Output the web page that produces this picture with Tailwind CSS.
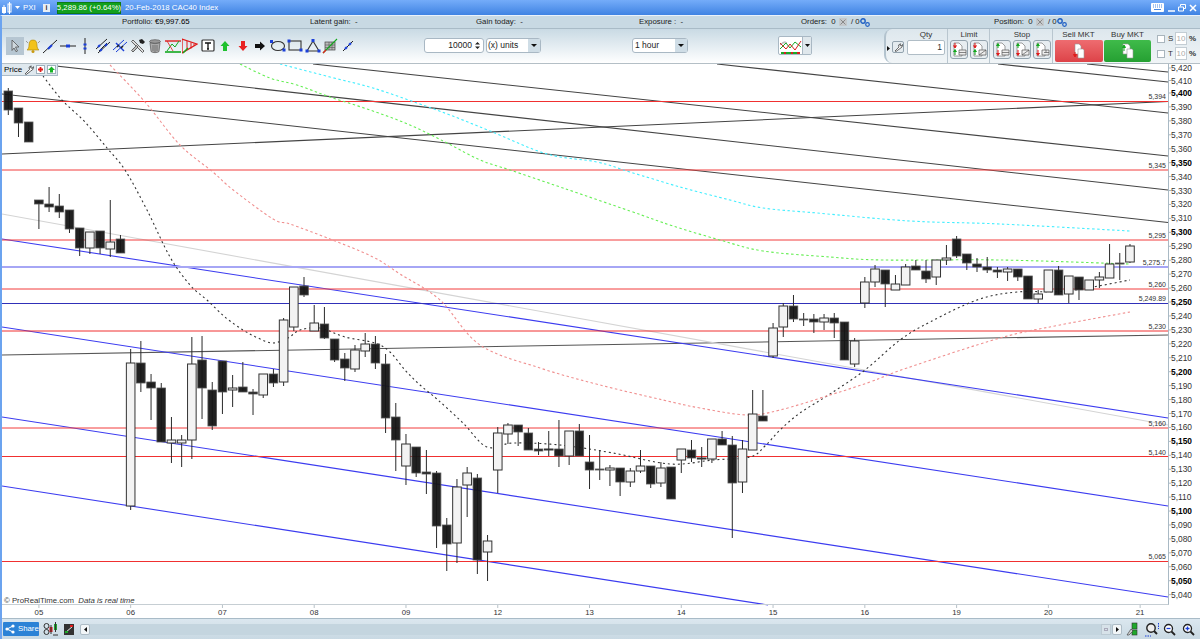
<!doctype html>
<html>
<head>
  <meta charset="UTF-8">
  <script src="https://cdn.jsdelivr.net/npm/@tailwindcss/browser@4"></script>
</head>
<body class="w-[1200px] h-[639px] overflow-hidden bg-white flex flex-col font-['Liberation_Sans',Arial,sans-serif] text-[7.8px] leading-none text-[#222]">

  <!-- title bar -->
  <div class="h-[15px] shrink-0 flex items-center bg-linear-to-b from-[#74acf9] to-[#3f83e3] text-white">
    <svg class="ml-[2px] w-[10px] h-[12px]" viewBox="0 0 10 12"><rect x="0" y="5" width="4" height="6" fill="#fff"/><rect x="6" y="2" width="3" height="8" fill="none" stroke="#fff"/><path d="M7.5 0v12M2 3v9" stroke="#fff"/></svg>
    <svg class="ml-[3px] w-[5px] h-[3px]" viewBox="0 0 5 3"><path d="M0 0h5L2.5 3z" fill="#fff"/></svg>
    <span class="ml-[3px] w-[20px]">PXI</span>
    <span class="w-[7px] h-[8px] bg-[#e8eef5] text-[#333] font-bold text-[7px] flex items-center justify-center">i</span>
    <span class="ml-[7px] w-[64px] h-[12px] bg-[#12a01e] border border-[#0c7a14] flex items-center justify-center whitespace-nowrap">5,289.86 (+0.64%)</span>
    <span class="ml-[4px] whitespace-nowrap">20-Feb-2018 CAC40 Index</span>
    <svg class="ml-auto w-[13px] h-[9px]" viewBox="0 0 13 9"><rect width="13" height="9" rx="1" fill="#fff"/><path d="M2 2h9M2 4h9" stroke="#4a88e0" stroke-dasharray="1 1"/><path d="M3 6.500h7" stroke="#4a88e0"/></svg>
    <svg class="ml-[4px] w-[7px] h-[8px]" viewBox="0 0 7 8"><path d="M0 7h7" stroke="#fff" stroke-width="1.500"/></svg>
    <svg class="ml-[3px] w-[8px] h-[8px]" viewBox="0 0 8 8"><path d="M2.500 2.500V.5h5v4H5.500M.5 3h5v4h-5z" stroke="#fff" fill="none"/></svg>
    <svg class="ml-[3px] mr-[3px] w-[8px] h-[8px]" viewBox="0 0 8 8"><path d="M1 1l6 6M7 1L1 7" stroke="#fff" stroke-width="1.500"/></svg>
  </div>

  <div class="flex-1 flex flex-col border-t border-[#eaf2fb] border-l-2 border-l-[#6ba3ef]">
    <!-- account summary -->
    <div class="h-[13px] shrink-0 flex items-center bg-[#c8d9e3] border-b border-[#a9bbc7] pl-[120px]">
      <span class="w-[188px]">Portfolio: <span class="text-black">€9,997.65</span></span>
      <span class="w-[166px]">Latent gain: &nbsp;-</span>
      <span class="w-[163px]">Gain today: &nbsp;-</span>
      <span class="w-[162px]">Exposure : &nbsp;-</span>
      <span class="w-[193px] flex items-center">Orders: &nbsp;0
        <svg class="ml-[3px] w-[8px] h-[8px]" viewBox="0 0 8 8"><rect width="8" height="8" fill="#c5c9cc"/><path d="M1.500 1.500l5 5M6.500 1.500l-5 5" stroke="#888"/></svg>
        <span>&nbsp;&nbsp;/ 0</span>
        <svg class="w-[10px] h-[9px]" viewBox="0 0 10 9"><circle cx="3" cy="3" r="2.200" fill="none" stroke="#1f5fc4" stroke-width="1.400"/><circle cx="7.500" cy="6.500" r="1.800" fill="none" stroke="#1f5fc4" stroke-width="1.200"/></svg>
      </span>
      <span class="flex items-center">Position: &nbsp;0
        <svg class="ml-[3px] w-[8px] h-[8px]" viewBox="0 0 8 8"><rect width="8" height="8" fill="#c5c9cc"/><path d="M1.500 1.500l5 5M6.500 1.500l-5 5" stroke="#888"/></svg>
        <span>&nbsp;&nbsp;/ 0</span>
        <svg class="w-[10px] h-[9px]" viewBox="0 0 10 9"><circle cx="3" cy="3" r="2.200" fill="none" stroke="#1f5fc4" stroke-width="1.400"/><circle cx="7.500" cy="6.500" r="1.800" fill="none" stroke="#1f5fc4" stroke-width="1.200"/></svg>
      </span>
    </div>

    <!-- toolbar -->
    <div class="h-[35px] shrink-0 flex bg-linear-to-b from-[#c9dae4] to-white border-b border-[#b4bfc6]">
      <div class="w-[422px] shrink-0 flex items-center gap-[1.500px] pl-[5px]">
        <span class="w-4 h-4 bg-[#b6c6d2] outline-1 outline-[#b6c6d2]">
          <svg class="w-4 h-4" viewBox="0 0 16 16"><path d="M5 2l7 7H8.500l2 4-1.500.7L7 10l-2 2.500z" fill="#cfd8de" stroke="#555" stroke-width=".8"/></svg>
        </span>
        <svg class="w-4 h-4" viewBox="0 0 16 16"><path d="M8 2c3 0 4 2 4 5s1 4 2 5H2c1-1 2-2 2-5s1-5 4-5z" fill="#f2c21a" stroke="#a98408" stroke-width=".6"/><circle cx="8" cy="13.500" r="1.500" fill="#c99a10"/><path d="M1 3l2 2M15 3l-2 2" stroke="#999"/></svg>
        <svg class="w-4 h-4" viewBox="0 0 16 16"><path d="M1 15L15 2" stroke="#222"/><path d="M6 11l4-4" stroke="#1b3fd8" stroke-width="2"/></svg>
        <svg class="w-4 h-4" viewBox="0 0 16 16"><path d="M0 8h16" stroke="#222"/><path d="M6 8h4" stroke="#1b3fd8" stroke-width="3"/></svg>
        <svg class="w-4 h-4" viewBox="0 0 16 16"><path d="M8 0v16" stroke="#222"/><path d="M8 5.500v2M8 9.500v2" stroke="#1b3fd8" stroke-width="3"/></svg>
        <svg class="w-4 h-4" viewBox="0 0 16 16"><path d="M1 11L12 1M3 15L15 4M4 13l8-8" stroke="#222"/><path d="M3 9l2-2M5 13l2-2M10 8l2-2" stroke="#1b3fd8" stroke-width="2"/></svg>
        <svg class="w-4 h-4" viewBox="0 0 16 16"><path d="M1 12L12 2M4 14L15 4" stroke="#1b3fd8"/><path d="M4 5l8 8" stroke="#1b3fd8" stroke-width="1.400"/><path d="M5 9l2-2M9 10l2-2" stroke="#222" stroke-width="1.500"/></svg>
        <svg class="w-4 h-4" viewBox="0 0 16 16"><path d="M3 2l11 11-1.500 1.500L1.500 3.500z" fill="#ddd" stroke="#444" stroke-width=".8"/><path d="M8 9l-5 5 -1.500-1.500L6.500 7.500z" fill="#bbb" stroke="#444" stroke-width=".8"/><path d="M9 2l3-1 3 3-2 2-3-1z" fill="#222"/></svg>
        <svg class="w-4 h-4" viewBox="0 0 16 16"><ellipse cx="8" cy="3.500" rx="5.500" ry="1.800" fill="#999" stroke="#555" stroke-width=".7"/><path d="M3 4.500l1 9c1 1.500 7 1.500 8 0l1-9c-2 1.500-8 1.500-10 0z" fill="#aaa" stroke="#555" stroke-width=".7"/><path d="M6 7v6M8 7v7M10 7v6" stroke="#666" stroke-width=".8"/></svg>
        <svg class="w-4 h-4" viewBox="0 0 16 16"><path d="M0 3h16" stroke="#e01b1b" stroke-width="1.400"/><path d="M0 14h16" stroke="#12a81e" stroke-width="1.600"/><path d="M2 13l5-7 3 3 4-6" stroke="#12a81e" fill="none"/><path d="M2 3l6 10" stroke="#e01b1b" stroke-width=".8"/></svg>
        <svg class="w-4 h-4" viewBox="0 0 16 16"><path d="M0 1l15 5-15 9z" fill="none" stroke="#e01b1b" stroke-width="1.300"/><path d="M5 3v9M9 4.500v6M12 5.500v2" stroke="#e01b1b"/><path d="M1 15l5-5" stroke="#12a81e" stroke-width="1.400"/></svg>
        <svg class="w-4 h-4" viewBox="0 0 16 16"><rect x="2" y="2" width="12" height="11" rx="1" fill="#fff" stroke="#333" stroke-width="1.200"/><path d="M5 5h6M8 5v6M7 11h2" stroke="#111" stroke-width="1.300"/></svg>
        <svg class="w-4 h-4" viewBox="0 0 16 16"><path d="M8 3l4.500 5H10v5H6V8H3.500z" fill="#1fc12e"/></svg>
        <svg class="w-4 h-4" viewBox="0 0 16 16"><path d="M8 13l4.500-5H10V3H6v5H3.500z" fill="#e82222"/></svg>
        <svg class="w-4 h-4" viewBox="0 0 16 16"><path d="M13 8L8 3.500V6H3v4h5v2.500z" fill="#111"/></svg>
        <svg class="w-4 h-4" viewBox="0 0 16 16"><ellipse cx="8" cy="8" rx="6.500" ry="4.500" fill="none" stroke="#333" stroke-width="1.100"/><rect x="0" y="2" width="3" height="3" fill="#1b3fd8"/><rect x="12.500" y="10.500" width="3" height="3" fill="#1b3fd8"/></svg>
        <svg class="w-4 h-4" viewBox="0 0 16 16"><rect x="2" y="3" width="12" height="9" fill="none" stroke="#333" stroke-width="1.100"/><rect x="0.500" y="1.500" width="3" height="3" fill="#1b3fd8"/><rect x="12.500" y="10.500" width="3" height="3" fill="#1b3fd8"/></svg>
        <svg class="w-4 h-4" viewBox="0 0 16 16"><path d="M8 3l6 10H2z" fill="none" stroke="#333" stroke-width="1.100"/><rect x="6.500" y="1" width="3" height="3" fill="#1b3fd8"/><rect x="0.500" y="11.500" width="3" height="3" fill="#1b3fd8"/><rect x="12.500" y="11.500" width="3" height="3" fill="#1b3fd8"/></svg>
        <svg class="w-4 h-4" viewBox="0 0 16 16"><rect x="3" y="4" width="10" height="8" fill="#bbb" stroke="#444" stroke-width=".7"/><path d="M3 7h10M3 9.500h10M7 4v8M10 4v8" stroke="#555" stroke-width=".6"/><path d="M1 15L15 1" stroke="#12a81e" stroke-width="1.100"/><path d="M1 15l3-3" stroke="#e01b1b" stroke-width="1.300"/></svg>
        <svg class="w-4 h-4" viewBox="0 0 16 16"><path d="M3 13l10-10" stroke="#222"/><path d="M5 11l2-2M9 7l2-2" stroke="#1b3fd8" stroke-width="2.200"/></svg>
      </div>

      <div class="w-[60px] h-[15px] mt-[9px] flex items-center justify-end bg-white border border-[#a9b8c4] rounded-[3px] text-[8.500px] pr-[11px] relative">10000
        <svg class="absolute right-[2px] top-[2px] w-[7px] h-[9px]" viewBox="0 0 7 9"><path d="M1 3.500L3.500 1 6 3.500zM1 5.500L3.500 8 6 5.500z" fill="#222"/></svg>
      </div>
      <div class="ml-[2px] w-[55px] h-[15px] mt-[9px] flex items-center justify-between bg-white border border-[#a9b8c4] rounded-[3px] pl-[1px] text-[8.500px]">(x) units
        <span class="w-[12px] h-full bg-[#cfdde6] flex items-center justify-center"><svg class="w-[6px] h-[3px]" viewBox="0 0 6 3"><path d="M0 0h6L3 3z" fill="#111"/></svg></span>
      </div>
      <div class="ml-[91px] w-[56px] h-[15px] mt-[9px] flex items-center justify-between bg-white border border-[#a9b8c4] rounded-[3px] pl-[2px] text-[8.500px]">1 hour
        <span class="w-[12px] h-full bg-[#cfdde6] flex items-center justify-center"><svg class="w-[6px] h-[3px]" viewBox="0 0 6 3"><path d="M0 0h6L3 3z" fill="#111"/></svg></span>
      </div>
      <div class="ml-[90px] w-[34px] h-[19px] mt-[7px] flex bg-white border border-[#a9b8c4] rounded-[2px]">
        <svg class="w-[23px] h-[17px]" viewBox="0 0 23 17"><path d="M1 8c3-3 5-4 7-2" fill="#ddd" stroke="#aaa"/><path d="M1 12l6-6 4 5 5-6 6 5" stroke="#1aa826" fill="none"/><path d="M1 6l6 6 4-5 5 6 6-9" stroke="#d91e1e" fill="none"/><path d="M2 16h3M7 16h5M14 16h4" stroke="#1aa826" stroke-width="2"/><path d="M5 16h2M12 16h2M18 16h3" stroke="#d91e1e" stroke-width="2"/></svg>
        <span class="flex-1 bg-[#dfe7ec] border-l border-[#a9b8c4] flex items-center justify-center"><svg class="w-[5px] h-[3px]" viewBox="0 0 5 3"><path d="M0 0h5L2.500 3z" fill="#111"/></svg></span>
      </div>

      <!-- order ticket -->
      <div class="ml-[72px] flex-1 flex rounded-l-[8px] border-l-2 border-[#b3c3ce] bg-linear-to-b from-[#dde7ed] to-[#f1f5f7] text-[#333] text-[8px]">
        <div class="w-[6px] flex items-center"><svg class="w-[3px] h-[5px] ml-[1px] mt-[4px]" viewBox="0 0 3 5"><path d="M0 0l3 2.500L0 5z" fill="#111"/></svg></div>
        <div class="w-[12px] h-[12px] mt-[12px] flex items-center justify-center bg-[#e4ebef] border border-[#93a3ae] rounded-[2px]">
          <svg class="w-[9px] h-[9px]" viewBox="0 0 9 9"><path d="M1 8l4-4-.5-2L6.500.8 6 2.500 7.500 3 8.500 1.500 8 4 6 5.500 2 8.500z" fill="#fff" stroke="#333" stroke-width=".7"/></svg>
        </div>
        <div class="ml-[3px] w-[38px] flex flex-col items-center">
          <span class="h-[11px] pt-[2px]">Qty</span>
          <div class="w-full h-[15px] flex items-center justify-end pr-[2px] bg-white border border-[#b0bdc6] rounded-[2px] text-[8.500px]">1</div>
        </div>
        <div class="ml-[2px] pl-[1px] w-[42px] border-l border-[#b9c6cf] flex flex-col items-center">
          <span class="h-[11px] pt-[2px]">Limit</span>
          <div class="flex gap-[2px]">
            <svg class="w-[18px] h-[19px] rounded-[3px] bg-[#e7edf1] border border-[#93a3ae]" viewBox="0 0 16 17"><path d="M3 2h5l3 3v10H3z" fill="#fff" stroke="#777" stroke-width=".7"/><path d="M4 2v4M2.500 4.500L4 7l1.500-2.500" fill="#e01b1b" stroke="#e01b1b"/><path d="M4 14v-4M2.500 11L4 8.500 5.500 11" fill="#12a81e" stroke="#12a81e"/><path d="M8 9h7v5H8zM8 11.500h7" fill="#eee" stroke="#555" stroke-width=".7"/></svg>
            <svg class="w-[18px] h-[19px] rounded-[3px] bg-[#e7edf1] border border-[#93a3ae]" viewBox="0 0 16 17"><path d="M3 2h5l3 3v10H3z" fill="#fff" stroke="#777" stroke-width=".7"/><path d="M4 2v4M2.500 4.500L4 7l1.500-2.500" fill="#e01b1b" stroke="#e01b1b"/><path d="M4 14v-4M2.500 11L4 8.500 5.500 11" fill="#12a81e" stroke="#12a81e"/><path d="M8 9h7v5H8zM8 14l7-5" fill="#eee" stroke="#555" stroke-width=".7"/></svg>
          </div>
        </div>
        <div class="pl-[2px] w-[63px] border-l border-[#b9c6cf] flex flex-col items-center">
          <span class="h-[11px] pt-[2px]">Stop</span>
          <div class="flex gap-[2px]">
            <svg class="w-[18px] h-[19px] rounded-[3px] bg-[#e7edf1] border border-[#93a3ae]" viewBox="0 0 16 17"><path d="M3 2h5l3 3v10H3z" fill="#fff" stroke="#777" stroke-width=".7"/><path d="M4 7V3M2.500 5L4 2.500 5.500 5" fill="#12a81e" stroke="#12a81e"/><path d="M4 9v5M2.500 12L4 14.500 5.500 12" fill="#e01b1b" stroke="#e01b1b"/><path d="M8 9h7v5H8zM8 11.500h7" fill="#eee" stroke="#555" stroke-width=".7"/></svg>
            <svg class="w-[18px] h-[19px] rounded-[3px] bg-[#e7edf1] border border-[#93a3ae]" viewBox="0 0 16 17"><path d="M3 2h5l3 3v10H3z" fill="#fff" stroke="#777" stroke-width=".7"/><path d="M4 7V3M2.500 5L4 2.500 5.500 5" fill="#12a81e" stroke="#12a81e"/><path d="M4 9v5M2.500 12L4 14.500 5.500 12" fill="#e01b1b" stroke="#e01b1b"/><path d="M8 9h7v5H8zM8 14l7-5" fill="#eee" stroke="#555" stroke-width=".7"/></svg>
            <svg class="w-[18px] h-[19px] rounded-[3px] bg-[#e7edf1] border border-[#93a3ae]" viewBox="0 0 16 17"><path d="M3 2h5l3 3v10H3z" fill="#fff" stroke="#777" stroke-width=".7"/><path d="M4 7V3M2.500 5L4 2.500 5.500 5" fill="#12a81e" stroke="#12a81e"/><path d="M4 9v5M2.500 12L4 14.500 5.500 12" fill="#e01b1b" stroke="#e01b1b"/><path d="M8 9h7v5H8zM10 11.500h5M12 9v2.500" fill="#eee" stroke="#555" stroke-width=".7"/></svg>
          </div>
        </div>
        <div class="pl-[2px] w-[50px] border-l border-[#b9c6cf] flex flex-col items-center">
          <span class="h-[11px] pt-[2px]">Sell MKT</span>
          <div class="w-[48px] h-[22px] rounded-[2px] bg-linear-to-b from-[#ee6c70] to-[#dd4248] flex items-center justify-center">
            <svg class="w-[15px] h-[16px]" viewBox="0 0 15 16"><path d="M4 1h4l2 2v8H4z" fill="#fff" stroke="#999" stroke-width=".6"/><path d="M7 6h5l1 1v8H7z" fill="#fff" stroke="#999" stroke-width=".6"/><path d="M4 9v4M2.500 11.500L4 14l1.500-2.500z" fill="#e01b1b" stroke="#e01b1b"/></svg>
          </div>
        </div>
        <div class="ml-[2px] w-[47px] flex flex-col items-center">
          <span class="h-[11px] pt-[2px]">Buy MKT</span>
          <div class="w-[47px] h-[22px] rounded-[2px] bg-linear-to-b from-[#3fbb4a] to-[#25a032] flex items-center justify-center">
            <svg class="w-[15px] h-[16px]" viewBox="0 0 15 16"><path d="M3 1h5l2 2v8H3z" fill="#fff" stroke="#999" stroke-width=".6"/><path d="M7 6h5l1 1v8H7z" fill="#fff" stroke="#999" stroke-width=".6"/><path d="M4 8V3M2.500 4.500L4 2l1.500 2.500z" fill="#12a81e" stroke="#12a81e"/></svg>
          </div>
        </div>
        <div class="ml-[6px] flex flex-col gap-[2px] pt-[3px]">
          <div class="h-[13px] flex items-center"><span class="w-[8px] h-[8px] bg-white border border-[#a9b5bd]"></span><span class="ml-[3px] w-[7px]">S</span><span class="w-[12px] h-full flex items-center justify-center bg-white border border-[#c3cdd4] text-[#aaa]">10</span><span class="ml-[2px] font-bold">%</span></div>
          <div class="h-[13px] flex items-center"><span class="w-[8px] h-[8px] bg-white border border-[#a9b5bd]"></span><span class="ml-[3px] w-[7px]">T</span><span class="w-[12px] h-full flex items-center justify-center bg-white border border-[#c3cdd4] text-[#aaa]">10</span><span class="ml-[2px] font-bold">%</span></div>
        </div>
      </div>
    </div>

    <!-- chart -->
    <div class="relative h-[554px] shrink-0">
      <svg id="chart" class="block w-[1198px] h-[554px]" viewBox="2 64 1198 554" font-family="Liberation Sans, Arial, sans-serif"></svg>
      <div class="absolute left-0 top-0 w-[56px] h-[12px] flex items-center bg-[#dfe8ee] border-r border-b border-[#aabbc8] pl-[2px] text-black text-[8px]">
        <span>Price</span>
        <svg class="ml-[2px] w-[10px] h-[10px]" viewBox="0 0 9 9"><path d="M1 8l4-4-.5-2L6.500.8 6 2.500 7.500 3 8.500 1.500 8 4 6 5.500 2 8.500z" fill="#fff" stroke="#333" stroke-width=".7"/></svg>
        <svg class="ml-[2px] w-[9px] h-[9px]" viewBox="0 0 9 9"><rect x=".5" y=".5" width="8" height="8" fill="#fff" stroke="#9fb1bd"/><path d="M4.500 2v5M2 4.500h5" stroke="#e01b1b" stroke-width="1.800"/></svg>
        <svg class="ml-[2px] w-[9px] h-[9px]" viewBox="0 0 9 9"><rect x=".5" y=".5" width="8" height="8" fill="#fff" stroke="#9fb1bd"/><path d="M4.500 1.500L8 5H6v2.500H3V5H1z" fill="#17b326"/></svg>
      </div>
      <div class="absolute left-[2px] top-[533px] text-[#333]">© ProRealTime.com &nbsp;<span class="italic">Data is real time</span></div>
    </div>

    <!-- status bar -->
    <div class="flex-1 flex items-center border-t border-[#a9bbc7] bg-linear-to-b from-[#dbe7ef] to-[#c9d9e3]">
      <div class="ml-[1px] w-[36px] h-[14px] flex items-center bg-[#2b82d6] rounded-[1px] text-white">
        <svg class="ml-[2px] w-[10px] h-[10px]" viewBox="0 0 10 10"><path d="M2 5l6-3M2 5l6 3" stroke="#fff"/><circle cx="2" cy="5" r="1.600" fill="#fff"/><circle cx="8" cy="2" r="1.600" fill="#fff"/><circle cx="8" cy="8" r="1.600" fill="#fff"/></svg>
        <span class="ml-[3px]">Share</span>
      </div>
      <svg class="ml-[4px] w-[15px] h-[15px]" viewBox="0 0 15 15"><circle cx="3.500" cy="4" r="2.500" fill="none" stroke="#333"/><circle cx="3.500" cy="10" r="2.500" fill="none" stroke="#333"/><rect x="6.500" y="5" width="3" height="5" fill="#e01b1b"/><path d="M8 3v9" stroke="#333"/><rect x="11" y="2" width="3" height="6" fill="#1fa82c"/><path d="M12.500 0v10M10 13h5" stroke="#333"/></svg>
      <svg class="ml-[6px] w-[10px] h-[11px]" viewBox="0 0 10 11"><rect width="10" height="11" fill="#333"/><path d="M1 9l8-7" stroke="#eee"/><rect x="6" y="1" width="3" height="2" fill="#e01b1b"/><rect x="1" y="7" width="3" height="2" fill="#1fa82c"/></svg>
      <div class="ml-[6px] w-[1042px] h-[11px] flex justify-between bg-[#c4d5df] rounded-[2px]">
        <span class="w-[10px] h-full bg-[#f2f6f8] border border-[#aebcc6] rounded-[2px] flex items-center justify-center"><svg class="w-[3px] h-[5px]" viewBox="0 0 3 5"><path d="M3 0L0 2.500 3 5z" fill="#111"/></svg></span>
        <span class="flex">
          <span class="w-[10px] h-full bg-[#d7e2e9] border border-[#bccad3] flex items-center justify-center"><span class="w-[4px] h-[3px] border border-[#aab]"></span></span>
          <span class="ml-[1px] w-[10px] h-full bg-[#f2f6f8] border border-[#aebcc6] rounded-[2px] flex items-center justify-center"><svg class="w-[3px] h-[5px]" viewBox="0 0 3 5"><path d="M0 0l3 2.500L0 5z" fill="#111"/></svg></span>
        </span>
      </div>
      <svg class="ml-[4px] w-[13px] h-[14px]" viewBox="0 0 13 14"><rect x="6" y="1" width="5" height="6" fill="#1fa82c" stroke="#333" stroke-width=".6"/><rect x="6" y="8" width="5" height="5" fill="#1fa82c" stroke="#333" stroke-width=".6"/><path d="M1 13l4-6 2 2-4 4z" fill="#ccc" stroke="#333" stroke-width=".6"/></svg>
      <svg class="ml-[6px] w-[15px] h-[15px]" viewBox="0 0 15 15"><circle cx="6" cy="6" r="4.200" fill="#eee" stroke="#222" stroke-width="1.400"/><path d="M9 9l3 3" stroke="#222" stroke-width="2"/><path d="M13.500 1v6M0 14h6" stroke="#1b3fd8" stroke-dasharray="1.500 1"/></svg>
      <svg class="ml-[3px] w-[13px] h-[13px]" viewBox="0 0 13 13"><circle cx="5.500" cy="5.500" r="4" fill="#fff" stroke="#222" stroke-width="1.300"/><path d="M8.500 8.500l3.500 3.500" stroke="#222" stroke-width="1.800"/><path d="M3.500 5.500h4" stroke="#1b3fd8" stroke-width="1.300"/></svg>
      <svg class="ml-[6px] w-[13px] h-[13px]" viewBox="0 0 13 13"><circle cx="5.500" cy="5.500" r="4" fill="#fff" stroke="#222" stroke-width="1.300"/><path d="M8.500 8.500l3.500 3.500" stroke="#222" stroke-width="1.800"/><path d="M3.500 5.500h4M5.500 3.500v4" stroke="#1b3fd8" stroke-width="1.300"/></svg>
    </div>
  </div>

  <script>
    // [black?, wickTop, wickBottom, bodyTop, bodyBottom], one per bar, 10.2px apart
    const bars = [
      [1,88,115,91,110],[1,108,137,108,123],[1,122,142,122,142],
      [1,200,229,200,204],[1,187,212,204,207],[1,194,218,206,212],[1,210,233,210,229],[1,228,256,228,248],[0,232,254,232,248],[1,231,254,231,248],[0,200,257,242,249],[1,235,253,239,253],
      [0,349,510,363,506],[1,341,392,363,383],[1,374,420,382,388],[1,383,442,388,442],[0,417,463,440,443],[0,435,467,440,443],[0,337,459,364,440],[1,336,419,360,388],[1,382,430,390,426],[1,361,414,361,392],[0,375,407,388,390],[1,362,392,387,392],[1,389,415,392,394],[0,374,398,374,395],[1,369,387,374,383],[0,318,386,320,382],[0,287,331,287,327],[1,277,297,286,295],[0,305,331,323,331],[1,307,339,324,338],[1,339,362,339,360],[1,353,381,359,368],[0,345,372,350,369],[0,333,357,344,351],[1,336,369,344,363],[1,354,433,364,418],[1,403,471,417,440],
      [0,434,485,444,466],[1,447,477,447,473],[1,450,494,472,474],[1,471,548,473,526],[1,518,571,525,544],[0,479,563,487,543],[0,467,517,473,485],[1,474,574,478,560],[0,535,581,541,552],
      [0,427,493,433,470],[0,423,444,425,434],[1,425,446,425,432],[1,428,450,433,450],[1,442,455,449,451],[0,431,456,449,450],[1,420,467,449,456],[0,431,465,431,456],[1,424,456,431,456],[1,435,489,462,470],[1,450,480,469,470],[0,465,486,468,470],[1,468,496,468,482],[0,468,487,471,482],[0,450,473,466,471],[1,466,488,466,484],[0,462,487,468,483],[1,467,499,467,499],[0,449,473,449,460],[1,440,462,450,458],[0,447,467,458,459],[0,439,463,439,459],[1,431,445,439,445],[1,436,538,445,483],[0,440,493,449,482],[0,390,450,414,450],[1,390,421,416,421],
      [0,323,358,328,356],[0,303,337,306,327],[1,295,322,306,319],[1,313,326,319,320],[1,314,333,319,322],[0,314,330,318,322],[1,313,338,318,323],[1,322,360,322,360],[0,338,367,341,364],[0,277,308,282,303],[0,265,287,269,282],[1,270,307,270,284],[0,275,290,284,290],[0,264,285,267,285],[1,260,270,266,270],[1,260,283,271,279],[0,260,285,260,277],[0,245,265,258,260],[1,236,258,239,256],[1,254,270,254,263],[1,258,272,264,267],[1,257,273,267,270],[1,267,278,270,272],[0,267,281,269,272],[1,269,281,269,277],[1,276,299,276,299],[0,290,303,294,299],[0,270,292,270,292],[1,266,295,270,295],[0,276,303,276,294],[1,277,300,277,290],[0,280,290,280,290],[0,272,288,277,280],[0,244,278,264,278],[1,253,280,263,264],[0,244,263,246,262]
    ];
    const line = (x1, y1, x2, y2, color, w = 1) => `<line x1="${x1}" y1="${y1}" x2="${x2}" y2="${y2}" stroke="${color}" stroke-width="${w}"/>`;
    // catmull-rom through the points, the averages are curves and not polylines
    const dashed = (p, color, dash = '2.500 2.500') => {
      let d = `M${p[0][0]} ${p[0][1]}`;
      for (let i = 0; i < p.length - 1; i++) {
        const a = p[i - 1] || p[i], b = p[i], c = p[i + 1], e = p[i + 2] || c;
        d += `C${b[0] + (c[0] - a[0]) / 6} ${b[1] + (c[1] - a[1]) / 6} ${c[0] - (e[0] - b[0]) / 6} ${c[1] - (e[1] - b[1]) / 6} ${c[0]} ${c[1]}`;
      }
      return `<path d="${d}" fill="none" stroke="${color}" stroke-width="1.100" stroke-dasharray="${dash}"/>`;
    };
    let s = '';

    // trend lines
    [[1087,64,72],[998,64,82],[717,64,113],[313,64,156]].forEach(l => s += line(l[0], l[1], 1168, l[2], '#444', 1.100));
    s += line(2, 60, 1168, 190, '#444', 1.100) + line(2, 94, 1168, 222.500, '#444', 1.100) + line(2, 154, 1168, 101.500, '#444', 1.100);
    s += line(2, 355, 1168, 335, '#555', 1.100) + line(2, 214, 1168, 425, '#d4d4d4', 1.100);
    [[239,418],[327,506],[417,597]].forEach(l => s += line(2, l[0], 1168, l[1], '#3c3cf0', 1.100));
    s += line(2, 486, 768, 605, '#3c3cf0', 1.100);

    // support and resistance
    [101.5,331,456.5,561.5].forEach(y => s += line(2, y, 1168, y, '#f03030'));
    [170,240,289,428].forEach(y => s += line(2, y, 1168, y, '#f23c3c'));
    s += line(2, 267, 1168, 267, '#a6a6f5', 2) + line(2, 303.500, 1168, 303.500, '#3030b8');

    // moving averages
    s += dashed([[43,76],[62,100],[85,122],[107,148],[125,170],[147,210],[170,257],[190,285],[207,300],[225,317],[243,330],[258,338],[273,343],[288,338],[300,330],[320,328],[345,337],[375,343],[390,352],[405,370],[420,385],[438,400],[463,423],[487,447],[513,443],[560,445],[613,453],[670,464],[713,460],[750,457],[765,446],[780,430],[800,413],[830,394],[865,370],[900,340],[930,322],[977,300],[1017,292],[1067,291],[1130,280]], '#333', '2 3');
    s += dashed([[110,65],[145,102],[180,145],[213,172],[232,189],[273,219],[290,224],[330,239],[373,257],[400,274],[440,300],[480,345],[540,368],[600,385],[663,400],[700,408],[747,415],[780,410],[830,395],[870,382],[907,368],[1000,338],[1060,325],[1130,312]], '#f09090');
    s += dashed([[240,64],[270,78],[297,85],[330,97],[370,110],[410,125],[447,143],[480,160],[510,170],[563,188],[630,211],[673,226],[720,240],[763,251],[830,257],[883,260],[1000,260],[1130,264]], '#66ee55');
    s += dashed([[280,64],[330,77],[373,88],[417,103],[450,115],[490,131],[547,154],[597,162],[630,172],[680,187],[730,200],[763,208],[817,213],[910,221],[1000,224],[1130,231]], '#44eeff');

    // candles
    bars.forEach((b, i) => {
      const x = 8.300 + i * 10.197;
      s += line(x, b[1], x, b[2], '#2a2a2a');
      s += b[0]
        ? `<rect x="${x - 4.300}" y="${b[3]}" width="8.600" height="${b[4] - b[3]}" fill="#151515" fill-opacity=".95" stroke="#555" stroke-width=".8"/>`
        : `<rect x="${x - 4.300}" y="${b[3]}" width="8.600" height="${b[4] - b[3]}" fill="#f3f3f3" stroke="#333" stroke-width="1"/>`;
    });

    // level labels
    [[5394,96],[5345,165],[5295,235],[5275.7,262,'5,275.7'],[5260,284],[5249.89,298,'5,249.89'],[5230,326],[5160,423],[5140,452],[5065,556]].forEach(l => {
      const t = l[2] || String(l[0]).replace(/^5/, '5,');
      s += `<text x="1166" y="${l[1] + 2.500}" font-size="7px" text-anchor="end" fill="#333">${t}</text>`;
    });

    // price axis
    s += `<rect x="1168.500" y="64" width="31.500" height="541" fill="#fff"/>` + line(1168.500, 64, 1168.500, 605, '#a9b9c4');
    for (let p = 5420; p >= 5040; p -= 10) {
      const y = p > 5400 ? 93 + (p - 5400) / 10 * -12.500 : 93 + (5400 - p) * 1.3935;
      const bold = p % 50 == 0;
      s += line(1168.500, y, 1171, y, '#a9b9c4');
      s += `<text x="1171" y="${y + 3}" font-size="8.400px" ${bold ? 'font-weight="bold" fill="#000"' : 'fill="#333"'}>${String(p).replace(/^5/, '5,')}</text>`;
    }

    // date axis
    s += line(2, 604.500, 1168.500, 604.500, '#c6ced3');
    ['05','06','07','08','09','12','13','14','15','16','19','20','21'].forEach((d, i) => {
      const x = 38.900 + i * 91.770;
      s += line(x, 605, x, 608, '#b8c2c8');
      s += `<text x="${x}" y="615" font-size="7.800px" text-anchor="middle" fill="#333">${d}</text>`;
    });
    document.getElementById('chart').innerHTML = s;
  </script>
</body>
</html>
